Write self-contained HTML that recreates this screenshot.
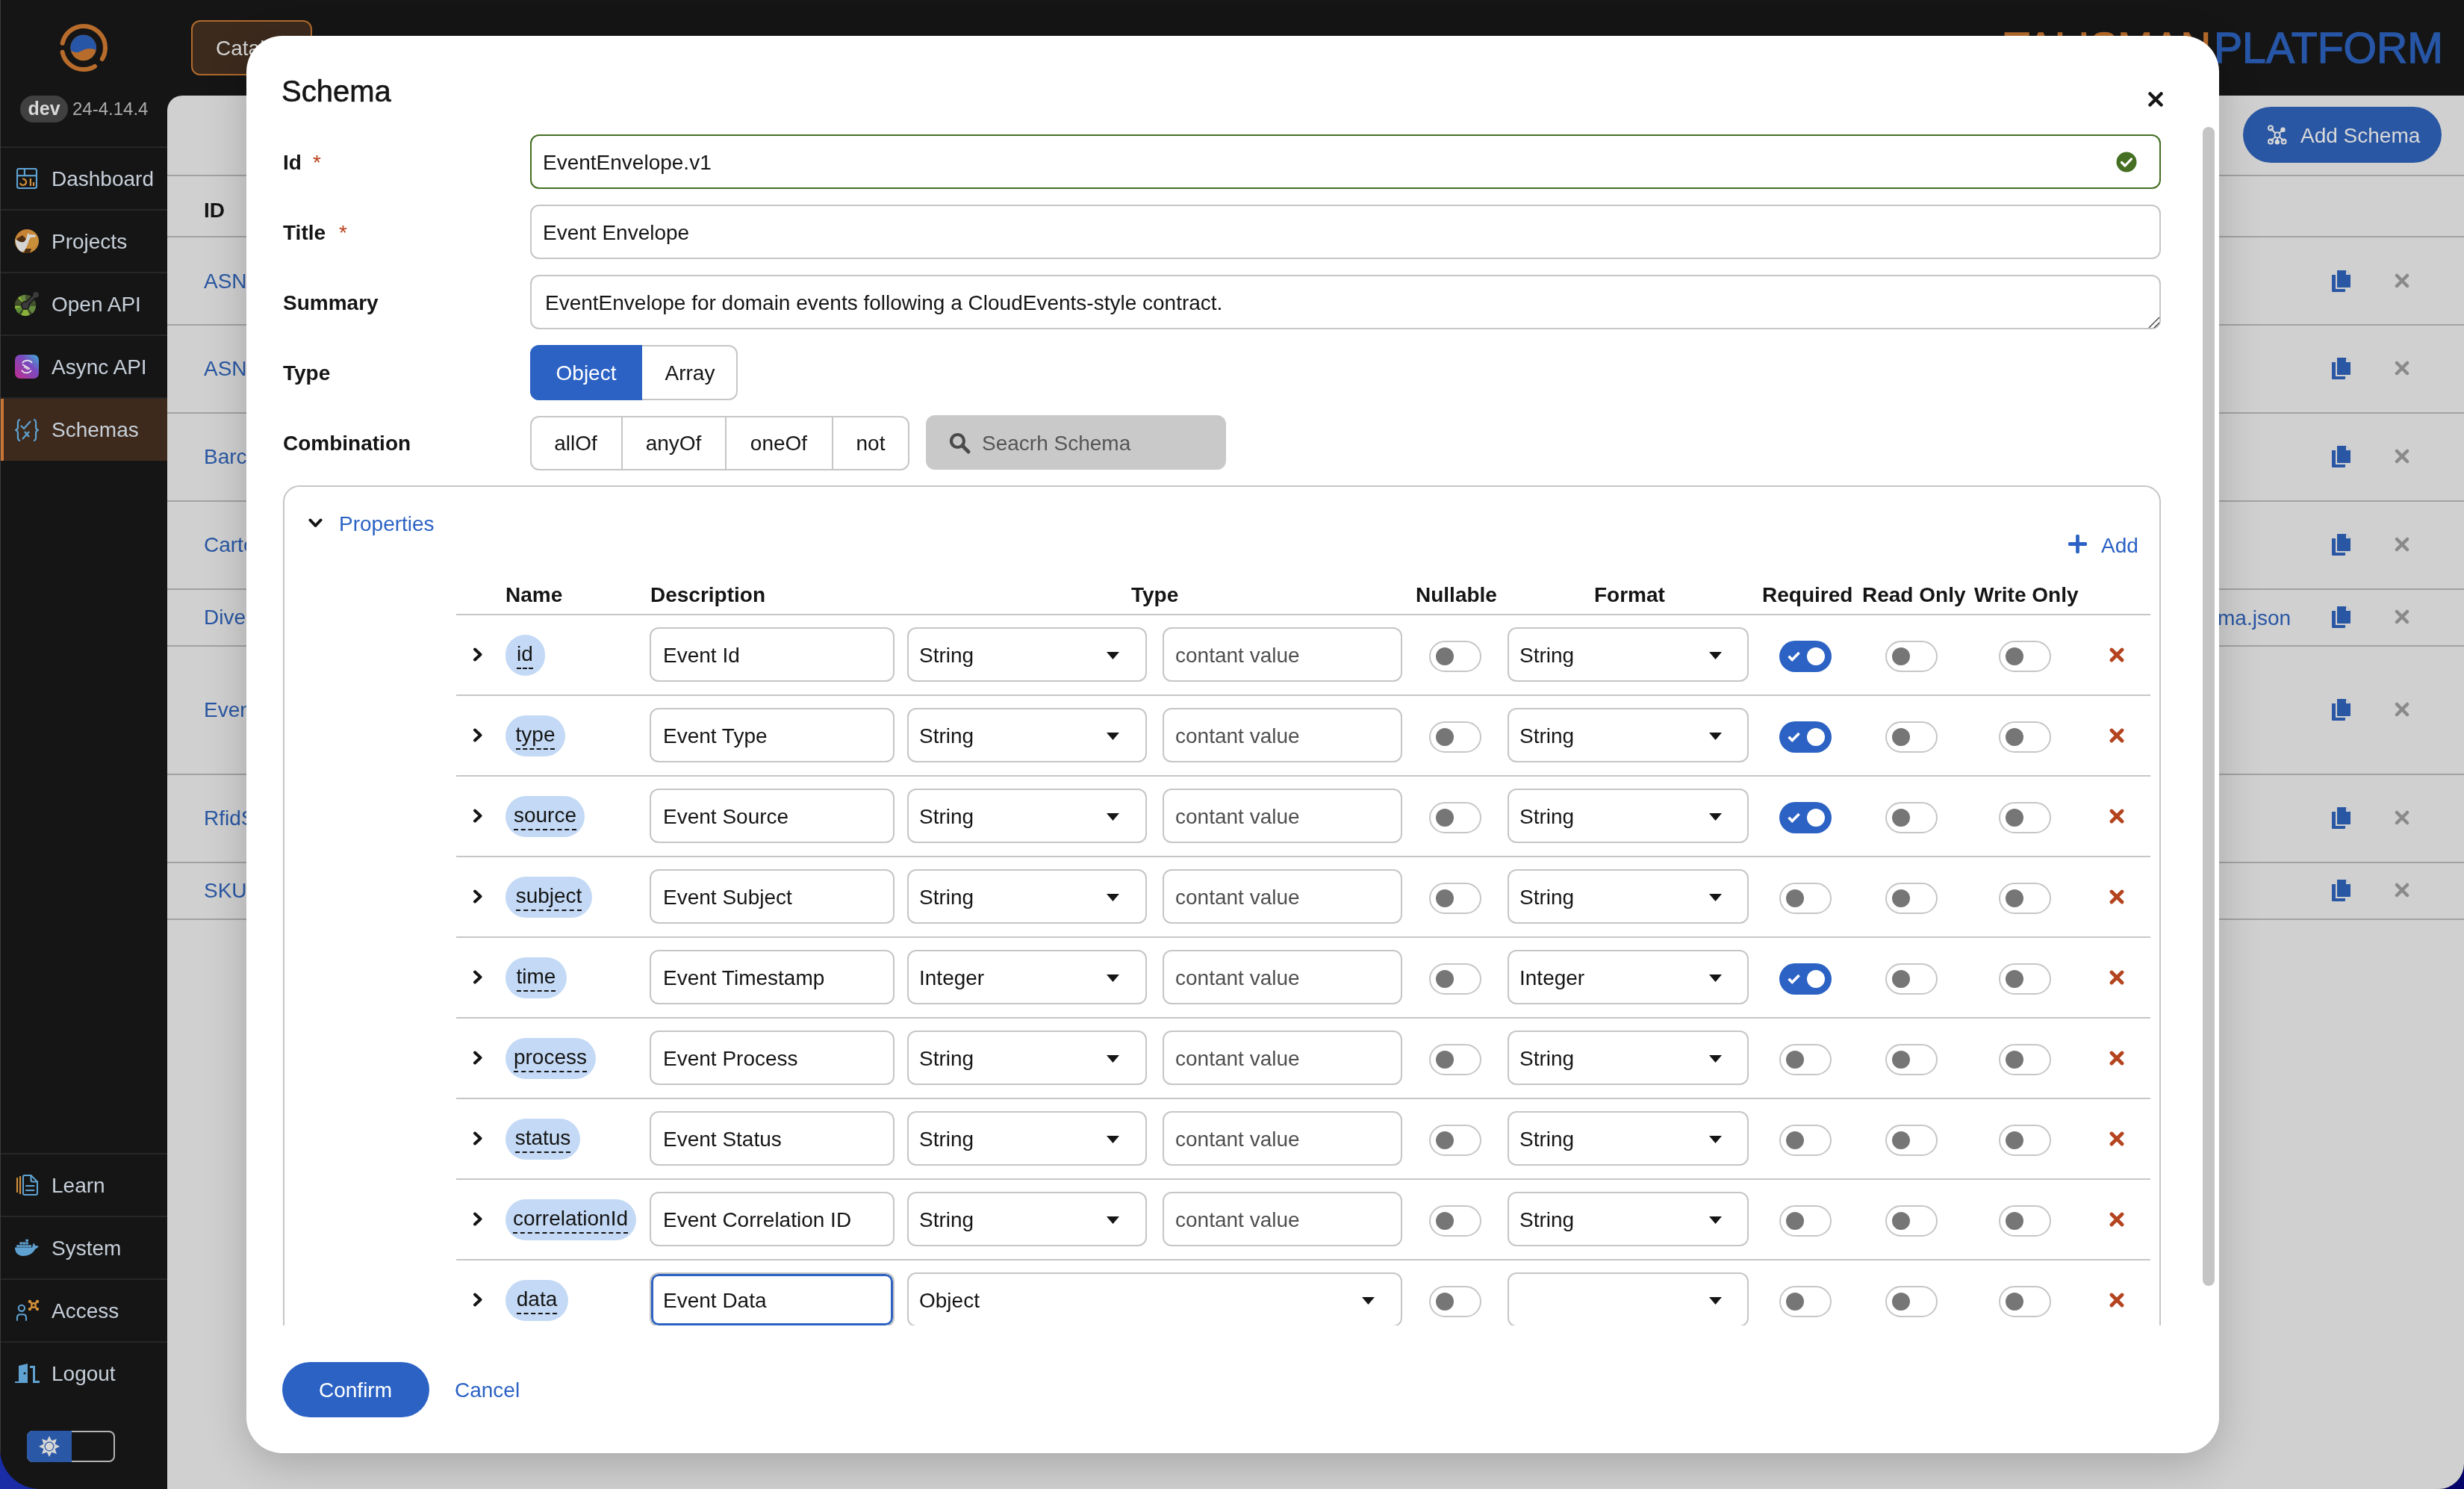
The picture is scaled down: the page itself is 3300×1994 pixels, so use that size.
<!DOCTYPE html><html><head><meta charset="utf-8"><style>
html,body{margin:0;padding:0;width:3300px;height:1994px;overflow:hidden;font-family:"Liberation Sans", sans-serif;}
body{background:linear-gradient(90deg,#1a2ca6 0%,#0d1a8a 40%,#03036a 100%);}
#win{will-change:transform;position:absolute;left:0;top:0;width:3300px;height:1994px;border-radius:0 0 34px 54px;overflow:hidden;background:#151515;}
</style></head><body><div id="win">
<div style="position:absolute;left:0px;top:0px;width:1px;height:1993px;background:#3a3a3a"></div>
<svg style="position:absolute;left:80px;top:32px" width="64" height="64" viewBox="0 0 64 64">
<circle cx="32" cy="32" r="29" fill="none" stroke="#b86c2c" stroke-width="6" stroke-linecap="round" stroke-dasharray="55.33 12.00 100.88 14.00" stroke-dashoffset="-29.78" />
<clipPath id="lc"><circle cx="31.7" cy="32" r="17.3"/></clipPath>
<g clip-path="url(#lc)"><rect x="0" y="0" width="64" height="64" fill="#b86c2c"/>
<path d="M10 33.3 C 16 36, 20 39.5, 25 38 C 30 36, 34 33, 40 33 C 44 33, 47 34.5, 52 36 L52 0 L10 0 Z" fill="#2756a6"/></g>
</svg>
<div style="position:absolute;left:27px;top:128px;width:64px;height:36px;background:#404040;border-radius:18px"></div>
<div style="position:absolute;left:-441px;width:1000px;text-align:center;top:133px;font-size:25px;line-height:25px;font-weight:700;color:#d8d8d8;white-space:nowrap;">dev</div>
<div style="position:absolute;left:97px;top:134px;font-size:24px;line-height:24px;font-weight:400;color:#ababab;white-space:nowrap;">24-4.14.4</div>
<div style="position:absolute;left:1px;top:196px;width:223px;height:2px;background:#262626"></div>
<div style="position:absolute;left:1px;top:280px;width:223px;height:2px;background:#262626"></div>
<div style="position:absolute;left:1px;top:364px;width:223px;height:2px;background:#262626"></div>
<div style="position:absolute;left:1px;top:448px;width:223px;height:2px;background:#262626"></div>
<div style="position:absolute;left:1px;top:532px;width:223px;height:2px;background:#262626"></div>
<div style="position:absolute;left:1px;top:1544px;width:223px;height:2px;background:#262626"></div>
<div style="position:absolute;left:1px;top:1628px;width:223px;height:2px;background:#262626"></div>
<div style="position:absolute;left:1px;top:1712px;width:223px;height:2px;background:#262626"></div>
<div style="position:absolute;left:1px;top:1796px;width:223px;height:2px;background:#262626"></div>
<div style="position:absolute;left:1px;top:534px;width:223px;height:83px;background:#3d2a1c"></div>
<div style="position:absolute;left:1px;top:534px;width:4px;height:83px;background:#c87533"></div>
<div style="position:absolute;left:69px;top:226px;font-size:28px;line-height:28px;font-weight:400;color:#c6cfd9;white-space:nowrap;">Dashboard</div>
<div style="position:absolute;left:69px;top:310px;font-size:28px;line-height:28px;font-weight:400;color:#c6cfd9;white-space:nowrap;">Projects</div>
<div style="position:absolute;left:69px;top:394px;font-size:28px;line-height:28px;font-weight:400;color:#c6cfd9;white-space:nowrap;">Open API</div>
<div style="position:absolute;left:69px;top:478px;font-size:28px;line-height:28px;font-weight:400;color:#c6cfd9;white-space:nowrap;">Async API</div>
<div style="position:absolute;left:69px;top:562px;font-size:28px;line-height:28px;font-weight:400;color:#c6cfd9;white-space:nowrap;">Schemas</div>
<div style="position:absolute;left:69px;top:1574px;font-size:28px;line-height:28px;font-weight:400;color:#c6cfd9;white-space:nowrap;">Learn</div>
<div style="position:absolute;left:69px;top:1658px;font-size:28px;line-height:28px;font-weight:400;color:#c6cfd9;white-space:nowrap;">System</div>
<div style="position:absolute;left:69px;top:1742px;font-size:28px;line-height:28px;font-weight:400;color:#c6cfd9;white-space:nowrap;">Access</div>
<div style="position:absolute;left:69px;top:1826px;font-size:28px;line-height:28px;font-weight:400;color:#c6cfd9;white-space:nowrap;">Logout</div>
<svg style="position:absolute;left:22px;top:225px" width="28" height="28" viewBox="0 0 28 28"><rect x="1" y="1" width="26" height="26" rx="2.5" fill="none" stroke="#5fa2d2" stroke-width="2.2"/>
<line x1="1" y1="10.2" x2="27" y2="10.2" stroke="#5fa2d2" stroke-width="2.2"/><line x1="10.9" y1="1" x2="10.9" y2="10.2" stroke="#5fa2d2" stroke-width="2.2"/>
<path d="M8.9 14.6 A4.2 4.2 0 1 1 5.26 20.9" fill="none" stroke="#d4903a" stroke-width="2.2" stroke-linecap="round"/>
<rect x="17.8" y="14" width="2.2" height="10" fill="#d4903a"/><rect x="21.9" y="19" width="2.2" height="5" fill="#d4903a"/></svg>
<svg style="position:absolute;left:20px;top:307px" width="32" height="32" viewBox="0 0 32 32"><defs><linearGradient id="pg" x1="0" y1="0" x2="1" y2="1"><stop offset="0" stop-color="#c47a32"/><stop offset="0.7" stop-color="#c9903a"/><stop offset="1" stop-color="#c47a32"/></linearGradient></defs><circle cx="16" cy="16" r="16" fill="url(#pg)"/>
<path d="M2 13 L10 8 L15 13 L12 19 L6 18 Z" fill="#4e2e12"/>
<path d="M14 26 L22 26 L20 32 L12 32 Z" fill="#4e2e12"/>
<path d="M0.5 13 C 4 16, 8 18, 12 17 C 15 15, 16 10, 17 6 L 18 5 L 19 7 L 27 7.5 L 28.5 9 L 27 10.5 L 21 11 C 19 13, 18 19, 15 25 C 13 29, 11 30, 9 30.5 C 4 28, 1 22, 0.5 13 Z" fill="#d4d4d4"/></svg>
<svg style="position:absolute;left:20px;top:391px" width="34" height="34" viewBox="0 0 34 34"><path d="M14 18 L14.00 3.80 A14.2 14.2 0 0 1 24.04 7.96 Z" fill="#475330"/><path d="M14 18 L24.04 7.96 A14.2 14.2 0 0 1 28.20 18.00 Z" fill="#475330"/><path d="M14 18 L28.20 18.00 A14.2 14.2 0 0 1 23.13 28.88 Z" fill="#65893e"/><path d="M14 18 L23.13 28.88 A14.2 14.2 0 0 1 20.00 30.87 Z" fill="#3c4a28"/><path d="M14 18 L20.00 30.87 A14.2 14.2 0 0 1 8.00 30.87 Z" fill="#88b23a"/><path d="M14 18 L8.00 30.87 A14.2 14.2 0 0 1 4.87 28.88 Z" fill="#3e4c28"/><path d="M14 18 L4.87 28.88 A14.2 14.2 0 0 1 0.66 22.86 Z" fill="#5f8e3a"/><path d="M14 18 L0.66 22.86 A14.2 14.2 0 0 1 -0.20 18.00 Z" fill="#8cb83a"/><path d="M14 18 L-0.20 18.00 A14.2 14.2 0 0 1 3.96 7.96 Z" fill="#44502c"/><path d="M14 18 L3.96 7.96 A14.2 14.2 0 0 1 6.90 5.70 Z" fill="#8cb83a"/><path d="M14 18 L6.90 5.70 A14.2 14.2 0 0 1 14.00 3.80 Z" fill="#65893e"/><line x1="0" y1="18" x2="28" y2="18" stroke="#2e3a22" stroke-width="1"/><line x1="14" y1="18" x2="28.2" y2="3.8" stroke="#151515" stroke-width="6.5"/><circle cx="14" cy="18" r="6" fill="#151515"/><line x1="14" y1="18" x2="28.2" y2="3.8" stroke="#3b3b3d" stroke-width="3.6"/><circle cx="14" cy="18" r="4.6" fill="#3b3b3d"/><circle cx="28.2" cy="3.8" r="3.8" fill="#3b3b3d"/></svg>
<svg style="position:absolute;left:20px;top:475px" width="32" height="32" viewBox="0 0 32 32"><defs><linearGradient id="ag" x1="0" y1="1" x2="1" y2="0"><stop offset="0" stop-color="#c02e8e"/><stop offset="0.6" stop-color="#7a4ac0"/><stop offset="1" stop-color="#3ab0d8"/></linearGradient></defs>
<rect x="0" y="0" width="32" height="32" rx="7" fill="url(#ag)"/>
<path d="M23 11 A8 8 0 0 0 10 11" fill="none" stroke="#e8e8e8" stroke-width="1.8"/>
<path d="M9 21 A8 8 0 0 0 22 21" fill="none" stroke="#e8e8e8" stroke-width="1.8"/>
<line x1="10" y1="13" x2="20" y2="19" stroke="#e8e8e8" stroke-width="1.8"/><line x1="12" y1="16" x2="18" y2="20" stroke="#e8e8e8" stroke-width="1.5"/></svg>
<svg style="position:absolute;left:20px;top:561px" width="32" height="30" viewBox="0 0 32 30"><path d="M7 1 C3 1 4 6 4 11 C4 14 1 15 1 15 C1 15 4 16 4 19 C4 24 3 29 7 29" fill="none" stroke="#5fa2d2" stroke-width="2.2"/>
<path d="M25 1 C29 1 28 6 28 11 C28 14 31 15 31 15 C31 15 28 16 28 19 C28 24 29 29 25 29" fill="none" stroke="#5fa2d2" stroke-width="2.2"/>
<path d="M8 9 L12 13 L21 3" fill="none" stroke="#5fa2d2" stroke-width="2.2"/>
<path d="M13 17 L19 24 M19 17 L10 27" fill="none" stroke="#5fa2d2" stroke-width="2.2"/></svg>
<svg style="position:absolute;left:22px;top:1573px" width="29" height="29" viewBox="0 0 29 29"><rect x="0" y="4" width="2.1" height="20" fill="#d4903a"/><rect x="4" y="2" width="2.1" height="24" fill="#d4903a"/>
<path d="M11 1 L19.5 1 L28 9.5 L28 25 Q28 27 26 27 L11 27 Q9 27 9 25 L9 3 Q9 1 11 1 Z" fill="none" stroke="#5fa2d2" stroke-width="2.1" stroke-linejoin="round"/>
<path d="M19.5 1 L19.5 7.5 Q19.5 9.5 21.5 9.5 L28 9.5" fill="none" stroke="#5fa2d2" stroke-width="2.1"/>
<rect x="12.2" y="14" width="12" height="2.1" fill="#5fa2d2"/><rect x="12.2" y="20" width="12" height="2.1" fill="#5fa2d2"/></svg>
<svg style="position:absolute;left:20px;top:1658px" width="33" height="26" viewBox="0 0 33 26"><path d="M0 12.6 L23.2 12.6 C23.5 10, 24.3 7.5, 25.2 6.4 C26 7.6, 26.6 8.8, 27.2 10 C28.8 10, 30.4 10.2, 31.8 10.9 C30.6 12.6, 29 14, 27.3 14.6 C24.5 20.5, 18.5 24, 11 24 C4 24, 0 19.5, 0 12.6 Z" fill="#5fa2d2"/><rect x="2.3" y="9.2" width="3.6" height="3.0" fill="#5fa2d2"/><rect x="6.3" y="9.2" width="3.6" height="3.0" fill="#5fa2d2"/><rect x="10.3" y="9.2" width="3.6" height="3.0" fill="#5fa2d2"/><rect x="14.3" y="9.2" width="3.6" height="3.0" fill="#5fa2d2"/><rect x="18.3" y="9.2" width="3.6" height="3.0" fill="#5fa2d2"/><rect x="6.3" y="5.4" width="3.6" height="3.0" fill="#5fa2d2"/><rect x="10.3" y="5.4" width="3.6" height="3.0" fill="#5fa2d2"/><rect x="14.3" y="5.4" width="3.6" height="3.0" fill="#5fa2d2"/><rect x="14.3" y="1.7" width="3.6" height="3.0" fill="#5fa2d2"/></svg>
<svg style="position:absolute;left:20px;top:1740px" width="34" height="31" viewBox="0 0 34 31"><circle cx="8.9" cy="11.8" r="4.1" fill="none" stroke="#5fa2d2" stroke-width="2.1"/>
<path d="M3 28.8 L3 24.5 Q3 20.2 7.3 20.2 L10.7 20.2 Q15 20.2 15 24.5 L15 28.8" fill="none" stroke="#5fa2d2" stroke-width="2.1"/>
<path d="M19.9 2.9 L30 13.1 M30 2.9 L19.9 13.1" stroke="#d4903a" stroke-width="2.4"/>
<circle cx="19.9" cy="2.9" r="2.2" fill="#d4903a"/><circle cx="30" cy="2.9" r="2.2" fill="#d4903a"/><circle cx="19.9" cy="13.1" r="2.2" fill="#d4903a"/><circle cx="30" cy="13.1" r="2.2" fill="#d4903a"/>
<circle cx="24.95" cy="8" r="3.9" fill="#d4903a"/><circle cx="24.95" cy="8" r="1.6" fill="#151515"/></svg>
<svg style="position:absolute;left:20px;top:1825px" width="33" height="28" viewBox="0 0 33 28"><path d="M0 25 L5 25 L5 4 L17 1 L17 25 L17 27 L0 27 Z" fill="#5fa2d2"/>
<path d="M20 4 L27 4 L27 24 L33 24 L33 27 L24 27 L24 7 L20 7 Z" fill="#5fa2d2"/>
<circle cx="13" cy="14" r="1.5" fill="#151515"/></svg>
<div style="position:absolute;left:36px;top:1916px;width:118px;height:42px;border:2px solid #b3b3b3;border-radius:8px;box-sizing:border-box"></div>
<div style="position:absolute;left:36px;top:1916px;width:60px;height:42px;background:#2a58a6;border-radius:8px 0 0 8px"></div>
<svg style="position:absolute;left:52px;top:1923px" width="28" height="28" viewBox="0 0 28 28"><polygon points="14,0 17.2,6.3 23.9,4.1 21.7,10.8 28,14 21.7,17.2 23.9,23.9 17.2,21.7 14,28 10.8,21.7 4.1,23.9 6.3,17.2 0,14 6.3,10.8 4.1,4.1 10.8,6.3" fill="#d6d6d6"/>
<circle cx="14" cy="14" r="6.5" fill="#2a58a6"/><circle cx="14" cy="14" r="5.2" fill="#d6d6d6"/></svg>
<div style="position:absolute;left:256px;top:27px;width:162px;height:74px;background:#3c2a1d;border:2px solid #b06a2c;border-radius:12px;box-sizing:border-box"></div>
<div style="position:absolute;left:289px;top:51px;font-size:28px;line-height:28px;font-weight:400;color:#d6d6d6;white-space:nowrap;">Catalog</div>
<div style="position:absolute;left:2684px;top:35px;font-size:58px;line-height:58px;font-weight:400;color:#b86c2c;white-space:nowrap;transform-origin:0 0;transform:scaleX(0.97);-webkit-text-stroke:1.4px #b86c2c">TALISMAN</div>
<div style="position:absolute;left:2965px;top:35px;font-size:58px;line-height:58px;font-weight:400;color:#2756a6;white-space:nowrap;transform-origin:0 0;transform:scaleX(0.985);-webkit-text-stroke:1.4px #2756a6">PLATFORM</div>
<div style="position:absolute;left:224px;top:128px;width:3076px;height:1866px;background:#d0d0d0;border-top-left-radius:20px"></div>
<div style="position:absolute;left:3004px;top:143px;width:266px;height:75px;background:#2957a4;border-radius:38px"></div>
<svg style="position:absolute;left:3036px;top:167px" width="28" height="28" viewBox="0 0 28 28"><g stroke="#d8d8d8" stroke-width="2" fill="none"><line x1="5" y1="5" x2="14" y2="14"/><line x1="22" y1="6" x2="14" y2="14"/><line x1="14" y1="14" x2="5" y2="22"/><line x1="14" y1="14" x2="23" y2="22"/><line x1="14" y1="14" x2="14" y2="23"/><circle cx="5" cy="4.6" r="3"/><circle cx="5" cy="22.5" r="3"/><circle cx="22.6" cy="22.5" r="3"/><circle cx="14" cy="13.8" r="3.6" fill="#2957a4"/></g><circle cx="21.5" cy="6.7" r="3.2" fill="#d8d8d8"/><circle cx="13.8" cy="23.2" r="3.2" fill="#d8d8d8"/></svg>
<div style="position:absolute;left:3081px;top:168px;font-size:28px;line-height:28px;font-weight:400;color:#d8d8d8;white-space:nowrap;">Add Schema</div>
<div style="position:absolute;left:224px;top:234px;width:3076px;height:2px;background:#a2a2a2"></div>
<div style="position:absolute;left:224px;top:316px;width:3076px;height:2px;background:#a2a2a2"></div>
<div style="position:absolute;left:224px;top:434px;width:3076px;height:2px;background:#a2a2a2"></div>
<div style="position:absolute;left:224px;top:552px;width:3076px;height:2px;background:#a2a2a2"></div>
<div style="position:absolute;left:224px;top:670px;width:3076px;height:2px;background:#a2a2a2"></div>
<div style="position:absolute;left:224px;top:788px;width:3076px;height:2px;background:#a2a2a2"></div>
<div style="position:absolute;left:224px;top:864px;width:3076px;height:2px;background:#a2a2a2"></div>
<div style="position:absolute;left:224px;top:1036px;width:3076px;height:2px;background:#a2a2a2"></div>
<div style="position:absolute;left:224px;top:1154px;width:3076px;height:2px;background:#a2a2a2"></div>
<div style="position:absolute;left:224px;top:1230px;width:3076px;height:2px;background:#a2a2a2"></div>
<div style="position:absolute;left:273px;top:268px;font-size:28px;line-height:28px;font-weight:700;color:#151515;white-space:nowrap;">ID</div>
<div style="position:absolute;left:273px;top:363px;font-size:28px;line-height:28px;font-weight:400;color:#2957a3;white-space:nowrap;">ASN.v1</div>
<svg style="position:absolute;left:3123px;top:362px" width="25" height="29" viewBox="0 0 25 29"><path d="M7 0 L19 0 L25 6 L25 22 Q25 23 24 23 L8 23 Q7 23 7 22 Z" fill="#2957a3"/><path d="M19 0 L19 6 L25 6" fill="#d0d0d0"/><path d="M0 6 L5 6 L5 25 L18 25 L18 28 Q18 29 17 29 L1 29 Q0 29 0 28 Z" fill="#2957a3"/></svg>
<svg style="position:absolute;left:3207px;top:366px" width="20" height="20" viewBox="0 0 20 20"><path d="M3 3 L17 17 M17 3 L3 17" stroke="#8a8a8a" stroke-width="4.5" stroke-linecap="round"/></svg>
<div style="position:absolute;left:273px;top:480px;font-size:28px;line-height:28px;font-weight:400;color:#2957a3;white-space:nowrap;">ASNLine.v1</div>
<svg style="position:absolute;left:3123px;top:479px" width="25" height="29" viewBox="0 0 25 29"><path d="M7 0 L19 0 L25 6 L25 22 Q25 23 24 23 L8 23 Q7 23 7 22 Z" fill="#2957a3"/><path d="M19 0 L19 6 L25 6" fill="#d0d0d0"/><path d="M0 6 L5 6 L5 25 L18 25 L18 28 Q18 29 17 29 L1 29 Q0 29 0 28 Z" fill="#2957a3"/></svg>
<svg style="position:absolute;left:3207px;top:483px" width="20" height="20" viewBox="0 0 20 20"><path d="M3 3 L17 17 M17 3 L3 17" stroke="#8a8a8a" stroke-width="4.5" stroke-linecap="round"/></svg>
<div style="position:absolute;left:273px;top:598px;font-size:28px;line-height:28px;font-weight:400;color:#2957a3;white-space:nowrap;">Barcode.v1</div>
<svg style="position:absolute;left:3123px;top:597px" width="25" height="29" viewBox="0 0 25 29"><path d="M7 0 L19 0 L25 6 L25 22 Q25 23 24 23 L8 23 Q7 23 7 22 Z" fill="#2957a3"/><path d="M19 0 L19 6 L25 6" fill="#d0d0d0"/><path d="M0 6 L5 6 L5 25 L18 25 L18 28 Q18 29 17 29 L1 29 Q0 29 0 28 Z" fill="#2957a3"/></svg>
<svg style="position:absolute;left:3207px;top:601px" width="20" height="20" viewBox="0 0 20 20"><path d="M3 3 L17 17 M17 3 L3 17" stroke="#8a8a8a" stroke-width="4.5" stroke-linecap="round"/></svg>
<div style="position:absolute;left:273px;top:716px;font-size:28px;line-height:28px;font-weight:400;color:#2957a3;white-space:nowrap;">Carton.v1</div>
<svg style="position:absolute;left:3123px;top:715px" width="25" height="29" viewBox="0 0 25 29"><path d="M7 0 L19 0 L25 6 L25 22 Q25 23 24 23 L8 23 Q7 23 7 22 Z" fill="#2957a3"/><path d="M19 0 L19 6 L25 6" fill="#d0d0d0"/><path d="M0 6 L5 6 L5 25 L18 25 L18 28 Q18 29 17 29 L1 29 Q0 29 0 28 Z" fill="#2957a3"/></svg>
<svg style="position:absolute;left:3207px;top:719px" width="20" height="20" viewBox="0 0 20 20"><path d="M3 3 L17 17 M17 3 L3 17" stroke="#8a8a8a" stroke-width="4.5" stroke-linecap="round"/></svg>
<div style="position:absolute;left:273px;top:813px;font-size:28px;line-height:28px;font-weight:400;color:#2957a3;white-space:nowrap;">Diverter.v1</div>
<svg style="position:absolute;left:3123px;top:812px" width="25" height="29" viewBox="0 0 25 29"><path d="M7 0 L19 0 L25 6 L25 22 Q25 23 24 23 L8 23 Q7 23 7 22 Z" fill="#2957a3"/><path d="M19 0 L19 6 L25 6" fill="#d0d0d0"/><path d="M0 6 L5 6 L5 25 L18 25 L18 28 Q18 29 17 29 L1 29 Q0 29 0 28 Z" fill="#2957a3"/></svg>
<svg style="position:absolute;left:3207px;top:816px" width="20" height="20" viewBox="0 0 20 20"><path d="M3 3 L17 17 M17 3 L3 17" stroke="#8a8a8a" stroke-width="4.5" stroke-linecap="round"/></svg>
<div style="position:absolute;left:273px;top:937px;font-size:28px;line-height:28px;font-weight:400;color:#2957a3;white-space:nowrap;">EventEnvelope.v1</div>
<svg style="position:absolute;left:3123px;top:936px" width="25" height="29" viewBox="0 0 25 29"><path d="M7 0 L19 0 L25 6 L25 22 Q25 23 24 23 L8 23 Q7 23 7 22 Z" fill="#2957a3"/><path d="M19 0 L19 6 L25 6" fill="#d0d0d0"/><path d="M0 6 L5 6 L5 25 L18 25 L18 28 Q18 29 17 29 L1 29 Q0 29 0 28 Z" fill="#2957a3"/></svg>
<svg style="position:absolute;left:3207px;top:940px" width="20" height="20" viewBox="0 0 20 20"><path d="M3 3 L17 17 M17 3 L3 17" stroke="#8a8a8a" stroke-width="4.5" stroke-linecap="round"/></svg>
<div style="position:absolute;left:273px;top:1082px;font-size:28px;line-height:28px;font-weight:400;color:#2957a3;white-space:nowrap;">RfidScan.v1</div>
<svg style="position:absolute;left:3123px;top:1081px" width="25" height="29" viewBox="0 0 25 29"><path d="M7 0 L19 0 L25 6 L25 22 Q25 23 24 23 L8 23 Q7 23 7 22 Z" fill="#2957a3"/><path d="M19 0 L19 6 L25 6" fill="#d0d0d0"/><path d="M0 6 L5 6 L5 25 L18 25 L18 28 Q18 29 17 29 L1 29 Q0 29 0 28 Z" fill="#2957a3"/></svg>
<svg style="position:absolute;left:3207px;top:1085px" width="20" height="20" viewBox="0 0 20 20"><path d="M3 3 L17 17 M17 3 L3 17" stroke="#8a8a8a" stroke-width="4.5" stroke-linecap="round"/></svg>
<div style="position:absolute;left:273px;top:1179px;font-size:28px;line-height:28px;font-weight:400;color:#2957a3;white-space:nowrap;">SKU.v1</div>
<svg style="position:absolute;left:3123px;top:1178px" width="25" height="29" viewBox="0 0 25 29"><path d="M7 0 L19 0 L25 6 L25 22 Q25 23 24 23 L8 23 Q7 23 7 22 Z" fill="#2957a3"/><path d="M19 0 L19 6 L25 6" fill="#d0d0d0"/><path d="M0 6 L5 6 L5 25 L18 25 L18 28 Q18 29 17 29 L1 29 Q0 29 0 28 Z" fill="#2957a3"/></svg>
<svg style="position:absolute;left:3207px;top:1182px" width="20" height="20" viewBox="0 0 20 20"><path d="M3 3 L17 17 M17 3 L3 17" stroke="#8a8a8a" stroke-width="4.5" stroke-linecap="round"/></svg>
<div style="position:absolute;left:2970px;top:814px;font-size:28px;line-height:28px;font-weight:400;color:#2957a3;white-space:nowrap;">ma.json</div>
<div style="position:absolute;left:330px;top:48px;width:2642px;height:1898px;background:#ffffff;border-radius:48px;box-shadow:0 14px 56px rgba(0,0,0,0.2)"></div>
<div style="position:absolute;left:377px;top:102px;font-size:40px;line-height:40px;font-weight:400;color:#151515;white-space:nowrap;-webkit-text-stroke:0.6px #151515">Schema</div>
<svg style="position:absolute;left:2877px;top:123px" width="20" height="20" viewBox="0 0 20 20"><path d="M2.5 2.5 L17.5 17.5 M17.5 2.5 L2.5 17.5" stroke="#151515" stroke-width="4.5" stroke-linecap="round"/></svg>
<div style="position:absolute;left:2950px;top:170px;width:16px;height:1552px;background:#c4c4c4;border-radius:8px"></div>
<div style="position:absolute;left:330px;top:150px;width:2620px;height:1625px;overflow:hidden"><div style="position:absolute;left:-330px;top:-150px;width:3300px;height:1994px">
<div style="position:absolute;left:379px;top:204px;font-size:28px;line-height:28px;font-weight:700;color:#151515;white-space:nowrap;">Id</div>
<div style="position:absolute;left:379px;top:298px;font-size:28px;line-height:28px;font-weight:700;color:#151515;white-space:nowrap;">Title</div>
<div style="position:absolute;left:379px;top:392px;font-size:28px;line-height:28px;font-weight:700;color:#151515;white-space:nowrap;">Summary</div>
<div style="position:absolute;left:379px;top:486px;font-size:28px;line-height:28px;font-weight:700;color:#151515;white-space:nowrap;">Type</div>
<div style="position:absolute;left:379px;top:580px;font-size:28px;line-height:28px;font-weight:700;color:#151515;white-space:nowrap;">Combination</div>
<div style="position:absolute;left:419px;top:204px;font-size:28px;line-height:28px;font-weight:400;color:#b8401c;white-space:nowrap;">*</div>
<div style="position:absolute;left:454px;top:298px;font-size:28px;line-height:28px;font-weight:400;color:#b8401c;white-space:nowrap;">*</div>
<div style="position:absolute;left:710px;top:180px;width:2184px;height:73px;border:2.6px solid #456f23;border-radius:12px;box-sizing:border-box"></div>
<div style="position:absolute;left:727px;top:204px;font-size:28px;line-height:28px;font-weight:400;color:#151515;white-space:nowrap;">EventEnvelope.v1</div>
<svg style="position:absolute;left:2834px;top:203px" width="28" height="28" viewBox="0 0 28 28"><circle cx="14" cy="14" r="13.5" fill="#456f23"/><path d="M7.5 14.5 L12 19 L20.5 10" fill="none" stroke="#fff" stroke-width="3.2" stroke-linecap="round" stroke-linejoin="round"/></svg>
<div style="position:absolute;left:710px;top:274px;width:2184px;height:73px;border:2px solid #c6c6c6;border-radius:12px;box-sizing:border-box"></div>
<div style="position:absolute;left:727px;top:298px;font-size:28px;line-height:28px;font-weight:400;color:#151515;white-space:nowrap;">Event Envelope</div>
<div style="position:absolute;left:710px;top:368px;width:2184px;height:73px;border:2px solid #c6c6c6;border-radius:12px;box-sizing:border-box"></div>
<div style="position:absolute;left:730px;top:392px;font-size:28px;line-height:28px;font-weight:400;color:#151515;white-space:nowrap;">EventEnvelope for domain events following a CloudEvents-style contract.</div>
<svg style="position:absolute;left:2877px;top:424px" width="16" height="16" viewBox="0 0 16 16"><path d="M1 15 L15 1 M8 15 L15 8" stroke="#555" stroke-width="1.6"/></svg>
<div style="position:absolute;left:710px;top:462px;width:278px;height:74px;border:2px solid #c6c6c6;border-radius:12px;box-sizing:border-box"></div>
<div style="position:absolute;left:710px;top:462px;width:150px;height:74px;background:#2b62c4;border-radius:12px 0 0 12px"></div>
<div style="position:absolute;left:285px;width:1000px;text-align:center;top:486px;font-size:28px;line-height:28px;font-weight:400;color:#ffffff;white-space:nowrap;">Object</div>
<div style="position:absolute;left:424px;width:1000px;text-align:center;top:486px;font-size:28px;line-height:28px;font-weight:400;color:#151515;white-space:nowrap;">Array</div>
<div style="position:absolute;left:710px;top:557px;width:508px;height:73px;border:2px solid #c6c6c6;border-radius:12px;box-sizing:border-box"></div>
<div style="position:absolute;left:832px;top:557px;width:2px;height:73px;background:#c6c6c6"></div>
<div style="position:absolute;left:971px;top:557px;width:2px;height:73px;background:#c6c6c6"></div>
<div style="position:absolute;left:1114px;top:557px;width:2px;height:73px;background:#c6c6c6"></div>
<div style="position:absolute;left:271px;width:1000px;text-align:center;top:580px;font-size:28px;line-height:28px;font-weight:400;color:#151515;white-space:nowrap;">allOf</div>
<div style="position:absolute;left:402px;width:1000px;text-align:center;top:580px;font-size:28px;line-height:28px;font-weight:400;color:#151515;white-space:nowrap;">anyOf</div>
<div style="position:absolute;left:543px;width:1000px;text-align:center;top:580px;font-size:28px;line-height:28px;font-weight:400;color:#151515;white-space:nowrap;">oneOf</div>
<div style="position:absolute;left:666px;width:1000px;text-align:center;top:580px;font-size:28px;line-height:28px;font-weight:400;color:#151515;white-space:nowrap;">not</div>
<div style="position:absolute;left:1240px;top:556px;width:402px;height:73px;background:#c9c9c9;border-radius:12px"></div>
<svg style="position:absolute;left:1271px;top:579px" width="29" height="29" viewBox="0 0 29 29"><circle cx="11.5" cy="11.5" r="8.5" fill="none" stroke="#4a4a4a" stroke-width="4.2"/><line x1="18" y1="18" x2="26" y2="26" stroke="#4a4a4a" stroke-width="4.8" stroke-linecap="round"/></svg>
<div style="position:absolute;left:1315px;top:580px;font-size:28px;line-height:28px;font-weight:400;color:#555555;white-space:nowrap;">Seacrh Schema</div>
<div style="position:absolute;left:379px;top:650px;width:2515px;height:1300px;border:2px solid #c6c6c6;border-radius:22px;box-sizing:border-box"></div>
<svg style="position:absolute;left:413px;top:694px" width="19" height="14" viewBox="0 0 19 14"><path d="M2.5 2.5 L9.5 10 L16.5 2.5" fill="none" stroke="#151515" stroke-width="4" stroke-linecap="round" stroke-linejoin="round"/></svg>
<div style="position:absolute;left:454px;top:688px;font-size:28px;line-height:28px;font-weight:400;color:#2b62c4;white-space:nowrap;">Properties</div>
<svg style="position:absolute;left:2770px;top:716px" width="25" height="25" viewBox="0 0 25 25"><path d="M12.5 2 L12.5 23 M2 12.5 L23 12.5" stroke="#2b62c4" stroke-width="4.8" stroke-linecap="round"/></svg>
<div style="position:absolute;left:2814px;top:717px;font-size:28px;line-height:28px;font-weight:400;color:#2b62c4;white-space:nowrap;">Add</div>
<div style="position:absolute;left:677px;top:783px;font-size:28px;line-height:28px;font-weight:700;color:#151515;white-space:nowrap;">Name</div>
<div style="position:absolute;left:871px;top:783px;font-size:28px;line-height:28px;font-weight:700;color:#151515;white-space:nowrap;">Description</div>
<div style="position:absolute;left:1515px;top:783px;font-size:28px;line-height:28px;font-weight:700;color:#151515;white-space:nowrap;">Type</div>
<div style="position:absolute;left:1896px;top:783px;font-size:28px;line-height:28px;font-weight:700;color:#151515;white-space:nowrap;">Nullable</div>
<div style="position:absolute;left:2135px;top:783px;font-size:28px;line-height:28px;font-weight:700;color:#151515;white-space:nowrap;">Format</div>
<div style="position:absolute;left:2360px;top:783px;font-size:28px;line-height:28px;font-weight:700;color:#151515;white-space:nowrap;">Required</div>
<div style="position:absolute;left:2494px;top:783px;font-size:28px;line-height:28px;font-weight:700;color:#151515;white-space:nowrap;">Read Only</div>
<div style="position:absolute;left:2644px;top:783px;font-size:28px;line-height:28px;font-weight:700;color:#151515;white-space:nowrap;">Write Only</div>
<div style="position:absolute;left:611px;top:822px;width:2269px;height:2px;background:#c6c6c6"></div>
<svg style="position:absolute;left:633px;top:867px" width="14" height="19" viewBox="0 0 14 19"><path d="M3 2.5 L10.5 9.5 L3 16.5" fill="none" stroke="#151515" stroke-width="4" stroke-linecap="round" stroke-linejoin="round"/></svg>
<div style="position:absolute;left:677px;top:850px;width:53px;height:55px;background:#c3d9f5;border-radius:28px"></div>
<div style="position:absolute;left:203px;width:1000px;text-align:center;top:862px;font-size:28px;line-height:28px;font-weight:400;color:#151515;white-space:nowrap;"><span style="border-bottom:2px dashed #151515;padding-bottom:3px">id</span></div>
<div style="position:absolute;left:870px;top:840px;width:328px;height:73px;border:2px solid #c6c6c6;border-radius:12px;box-sizing:border-box"></div>
<div style="position:absolute;left:888px;top:864px;font-size:28px;line-height:28px;font-weight:400;color:#151515;white-space:nowrap;">Event Id</div>
<div style="position:absolute;left:1215px;top:840px;width:321px;height:73px;border:2px solid #c6c6c6;border-radius:12px;box-sizing:border-box"></div>
<div style="position:absolute;left:1231px;top:864px;font-size:28px;line-height:28px;font-weight:400;color:#151515;white-space:nowrap;">String</div>
<svg style="position:absolute;left:1482px;top:873px" width="17" height="10" viewBox="0 0 17 10"><path d="M0 0 L17 0 L8.5 10 Z" fill="#151515"/></svg>
<div style="position:absolute;left:1557px;top:840px;width:321px;height:73px;border:2px solid #c6c6c6;border-radius:12px;box-sizing:border-box"></div>
<div style="position:absolute;left:1574px;top:864px;font-size:28px;line-height:28px;font-weight:400;color:#4f4f4f;white-space:nowrap;">contant value</div>
<div style="position:absolute;left:1914px;top:858px;width:70px;height:42px;border:2px solid #c6c6c6;border-radius:21px;box-sizing:border-box;background:#fff"></div>
<div style="position:absolute;left:1923px;top:867px;width:24px;height:24px;border-radius:12px;background:#767676"></div>
<div style="position:absolute;left:2019px;top:840px;width:323px;height:73px;border:2px solid #c6c6c6;border-radius:12px;box-sizing:border-box"></div>
<div style="position:absolute;left:2035px;top:864px;font-size:28px;line-height:28px;font-weight:400;color:#151515;white-space:nowrap;">String</div>
<svg style="position:absolute;left:2289px;top:873px" width="17" height="10" viewBox="0 0 17 10"><path d="M0 0 L17 0 L8.5 10 Z" fill="#151515"/></svg>
<div style="position:absolute;left:2383px;top:858px;width:70px;height:42px;background:#2b62c4;border-radius:21px"></div>
<div style="position:absolute;left:2420px;top:867px;width:24px;height:24px;border-radius:12px;background:#fff"></div>
<svg style="position:absolute;left:2393px;top:871px" width="20" height="16" viewBox="0 0 20 16"><path d="M2.6 7.8 L7.2 12.4 L16.6 3" fill="none" stroke="#fff" stroke-width="3.6"/></svg>
<div style="position:absolute;left:2525px;top:858px;width:70px;height:42px;border:2px solid #c6c6c6;border-radius:21px;box-sizing:border-box;background:#fff"></div>
<div style="position:absolute;left:2534px;top:867px;width:24px;height:24px;border-radius:12px;background:#767676"></div>
<div style="position:absolute;left:2677px;top:858px;width:70px;height:42px;border:2px solid #c6c6c6;border-radius:21px;box-sizing:border-box;background:#fff"></div>
<div style="position:absolute;left:2686px;top:867px;width:24px;height:24px;border-radius:12px;background:#767676"></div>
<svg style="position:absolute;left:2825px;top:867px" width="20" height="20" viewBox="0 0 20 20"><path d="M3 3 L17 17 M17 3 L3 17" stroke="#b4441f" stroke-width="4.8" stroke-linecap="round"/></svg>
<div style="position:absolute;left:611px;top:930px;width:2269px;height:2px;background:#c6c6c6"></div>
<svg style="position:absolute;left:633px;top:975px" width="14" height="19" viewBox="0 0 14 19"><path d="M3 2.5 L10.5 9.5 L3 16.5" fill="none" stroke="#151515" stroke-width="4" stroke-linecap="round" stroke-linejoin="round"/></svg>
<div style="position:absolute;left:677px;top:958px;width:80px;height:55px;background:#c3d9f5;border-radius:28px"></div>
<div style="position:absolute;left:217px;width:1000px;text-align:center;top:970px;font-size:28px;line-height:28px;font-weight:400;color:#151515;white-space:nowrap;"><span style="border-bottom:2px dashed #151515;padding-bottom:3px">type</span></div>
<div style="position:absolute;left:870px;top:948px;width:328px;height:73px;border:2px solid #c6c6c6;border-radius:12px;box-sizing:border-box"></div>
<div style="position:absolute;left:888px;top:972px;font-size:28px;line-height:28px;font-weight:400;color:#151515;white-space:nowrap;">Event Type</div>
<div style="position:absolute;left:1215px;top:948px;width:321px;height:73px;border:2px solid #c6c6c6;border-radius:12px;box-sizing:border-box"></div>
<div style="position:absolute;left:1231px;top:972px;font-size:28px;line-height:28px;font-weight:400;color:#151515;white-space:nowrap;">String</div>
<svg style="position:absolute;left:1482px;top:981px" width="17" height="10" viewBox="0 0 17 10"><path d="M0 0 L17 0 L8.5 10 Z" fill="#151515"/></svg>
<div style="position:absolute;left:1557px;top:948px;width:321px;height:73px;border:2px solid #c6c6c6;border-radius:12px;box-sizing:border-box"></div>
<div style="position:absolute;left:1574px;top:972px;font-size:28px;line-height:28px;font-weight:400;color:#4f4f4f;white-space:nowrap;">contant value</div>
<div style="position:absolute;left:1914px;top:966px;width:70px;height:42px;border:2px solid #c6c6c6;border-radius:21px;box-sizing:border-box;background:#fff"></div>
<div style="position:absolute;left:1923px;top:975px;width:24px;height:24px;border-radius:12px;background:#767676"></div>
<div style="position:absolute;left:2019px;top:948px;width:323px;height:73px;border:2px solid #c6c6c6;border-radius:12px;box-sizing:border-box"></div>
<div style="position:absolute;left:2035px;top:972px;font-size:28px;line-height:28px;font-weight:400;color:#151515;white-space:nowrap;">String</div>
<svg style="position:absolute;left:2289px;top:981px" width="17" height="10" viewBox="0 0 17 10"><path d="M0 0 L17 0 L8.5 10 Z" fill="#151515"/></svg>
<div style="position:absolute;left:2383px;top:966px;width:70px;height:42px;background:#2b62c4;border-radius:21px"></div>
<div style="position:absolute;left:2420px;top:975px;width:24px;height:24px;border-radius:12px;background:#fff"></div>
<svg style="position:absolute;left:2393px;top:979px" width="20" height="16" viewBox="0 0 20 16"><path d="M2.6 7.8 L7.2 12.4 L16.6 3" fill="none" stroke="#fff" stroke-width="3.6"/></svg>
<div style="position:absolute;left:2525px;top:966px;width:70px;height:42px;border:2px solid #c6c6c6;border-radius:21px;box-sizing:border-box;background:#fff"></div>
<div style="position:absolute;left:2534px;top:975px;width:24px;height:24px;border-radius:12px;background:#767676"></div>
<div style="position:absolute;left:2677px;top:966px;width:70px;height:42px;border:2px solid #c6c6c6;border-radius:21px;box-sizing:border-box;background:#fff"></div>
<div style="position:absolute;left:2686px;top:975px;width:24px;height:24px;border-radius:12px;background:#767676"></div>
<svg style="position:absolute;left:2825px;top:975px" width="20" height="20" viewBox="0 0 20 20"><path d="M3 3 L17 17 M17 3 L3 17" stroke="#b4441f" stroke-width="4.8" stroke-linecap="round"/></svg>
<div style="position:absolute;left:611px;top:1038px;width:2269px;height:2px;background:#c6c6c6"></div>
<svg style="position:absolute;left:633px;top:1083px" width="14" height="19" viewBox="0 0 14 19"><path d="M3 2.5 L10.5 9.5 L3 16.5" fill="none" stroke="#151515" stroke-width="4" stroke-linecap="round" stroke-linejoin="round"/></svg>
<div style="position:absolute;left:677px;top:1066px;width:106px;height:55px;background:#c3d9f5;border-radius:28px"></div>
<div style="position:absolute;left:230px;width:1000px;text-align:center;top:1078px;font-size:28px;line-height:28px;font-weight:400;color:#151515;white-space:nowrap;"><span style="border-bottom:2px dashed #151515;padding-bottom:3px">source</span></div>
<div style="position:absolute;left:870px;top:1056px;width:328px;height:73px;border:2px solid #c6c6c6;border-radius:12px;box-sizing:border-box"></div>
<div style="position:absolute;left:888px;top:1080px;font-size:28px;line-height:28px;font-weight:400;color:#151515;white-space:nowrap;">Event Source</div>
<div style="position:absolute;left:1215px;top:1056px;width:321px;height:73px;border:2px solid #c6c6c6;border-radius:12px;box-sizing:border-box"></div>
<div style="position:absolute;left:1231px;top:1080px;font-size:28px;line-height:28px;font-weight:400;color:#151515;white-space:nowrap;">String</div>
<svg style="position:absolute;left:1482px;top:1089px" width="17" height="10" viewBox="0 0 17 10"><path d="M0 0 L17 0 L8.5 10 Z" fill="#151515"/></svg>
<div style="position:absolute;left:1557px;top:1056px;width:321px;height:73px;border:2px solid #c6c6c6;border-radius:12px;box-sizing:border-box"></div>
<div style="position:absolute;left:1574px;top:1080px;font-size:28px;line-height:28px;font-weight:400;color:#4f4f4f;white-space:nowrap;">contant value</div>
<div style="position:absolute;left:1914px;top:1074px;width:70px;height:42px;border:2px solid #c6c6c6;border-radius:21px;box-sizing:border-box;background:#fff"></div>
<div style="position:absolute;left:1923px;top:1083px;width:24px;height:24px;border-radius:12px;background:#767676"></div>
<div style="position:absolute;left:2019px;top:1056px;width:323px;height:73px;border:2px solid #c6c6c6;border-radius:12px;box-sizing:border-box"></div>
<div style="position:absolute;left:2035px;top:1080px;font-size:28px;line-height:28px;font-weight:400;color:#151515;white-space:nowrap;">String</div>
<svg style="position:absolute;left:2289px;top:1089px" width="17" height="10" viewBox="0 0 17 10"><path d="M0 0 L17 0 L8.5 10 Z" fill="#151515"/></svg>
<div style="position:absolute;left:2383px;top:1074px;width:70px;height:42px;background:#2b62c4;border-radius:21px"></div>
<div style="position:absolute;left:2420px;top:1083px;width:24px;height:24px;border-radius:12px;background:#fff"></div>
<svg style="position:absolute;left:2393px;top:1087px" width="20" height="16" viewBox="0 0 20 16"><path d="M2.6 7.8 L7.2 12.4 L16.6 3" fill="none" stroke="#fff" stroke-width="3.6"/></svg>
<div style="position:absolute;left:2525px;top:1074px;width:70px;height:42px;border:2px solid #c6c6c6;border-radius:21px;box-sizing:border-box;background:#fff"></div>
<div style="position:absolute;left:2534px;top:1083px;width:24px;height:24px;border-radius:12px;background:#767676"></div>
<div style="position:absolute;left:2677px;top:1074px;width:70px;height:42px;border:2px solid #c6c6c6;border-radius:21px;box-sizing:border-box;background:#fff"></div>
<div style="position:absolute;left:2686px;top:1083px;width:24px;height:24px;border-radius:12px;background:#767676"></div>
<svg style="position:absolute;left:2825px;top:1083px" width="20" height="20" viewBox="0 0 20 20"><path d="M3 3 L17 17 M17 3 L3 17" stroke="#b4441f" stroke-width="4.8" stroke-linecap="round"/></svg>
<div style="position:absolute;left:611px;top:1146px;width:2269px;height:2px;background:#c6c6c6"></div>
<svg style="position:absolute;left:633px;top:1191px" width="14" height="19" viewBox="0 0 14 19"><path d="M3 2.5 L10.5 9.5 L3 16.5" fill="none" stroke="#151515" stroke-width="4" stroke-linecap="round" stroke-linejoin="round"/></svg>
<div style="position:absolute;left:677px;top:1174px;width:116px;height:55px;background:#c3d9f5;border-radius:28px"></div>
<div style="position:absolute;left:235px;width:1000px;text-align:center;top:1186px;font-size:28px;line-height:28px;font-weight:400;color:#151515;white-space:nowrap;"><span style="border-bottom:2px dashed #151515;padding-bottom:3px">subject</span></div>
<div style="position:absolute;left:870px;top:1164px;width:328px;height:73px;border:2px solid #c6c6c6;border-radius:12px;box-sizing:border-box"></div>
<div style="position:absolute;left:888px;top:1188px;font-size:28px;line-height:28px;font-weight:400;color:#151515;white-space:nowrap;">Event Subject</div>
<div style="position:absolute;left:1215px;top:1164px;width:321px;height:73px;border:2px solid #c6c6c6;border-radius:12px;box-sizing:border-box"></div>
<div style="position:absolute;left:1231px;top:1188px;font-size:28px;line-height:28px;font-weight:400;color:#151515;white-space:nowrap;">String</div>
<svg style="position:absolute;left:1482px;top:1197px" width="17" height="10" viewBox="0 0 17 10"><path d="M0 0 L17 0 L8.5 10 Z" fill="#151515"/></svg>
<div style="position:absolute;left:1557px;top:1164px;width:321px;height:73px;border:2px solid #c6c6c6;border-radius:12px;box-sizing:border-box"></div>
<div style="position:absolute;left:1574px;top:1188px;font-size:28px;line-height:28px;font-weight:400;color:#4f4f4f;white-space:nowrap;">contant value</div>
<div style="position:absolute;left:1914px;top:1182px;width:70px;height:42px;border:2px solid #c6c6c6;border-radius:21px;box-sizing:border-box;background:#fff"></div>
<div style="position:absolute;left:1923px;top:1191px;width:24px;height:24px;border-radius:12px;background:#767676"></div>
<div style="position:absolute;left:2019px;top:1164px;width:323px;height:73px;border:2px solid #c6c6c6;border-radius:12px;box-sizing:border-box"></div>
<div style="position:absolute;left:2035px;top:1188px;font-size:28px;line-height:28px;font-weight:400;color:#151515;white-space:nowrap;">String</div>
<svg style="position:absolute;left:2289px;top:1197px" width="17" height="10" viewBox="0 0 17 10"><path d="M0 0 L17 0 L8.5 10 Z" fill="#151515"/></svg>
<div style="position:absolute;left:2383px;top:1182px;width:70px;height:42px;border:2px solid #c6c6c6;border-radius:21px;box-sizing:border-box;background:#fff"></div>
<div style="position:absolute;left:2392px;top:1191px;width:24px;height:24px;border-radius:12px;background:#767676"></div>
<div style="position:absolute;left:2525px;top:1182px;width:70px;height:42px;border:2px solid #c6c6c6;border-radius:21px;box-sizing:border-box;background:#fff"></div>
<div style="position:absolute;left:2534px;top:1191px;width:24px;height:24px;border-radius:12px;background:#767676"></div>
<div style="position:absolute;left:2677px;top:1182px;width:70px;height:42px;border:2px solid #c6c6c6;border-radius:21px;box-sizing:border-box;background:#fff"></div>
<div style="position:absolute;left:2686px;top:1191px;width:24px;height:24px;border-radius:12px;background:#767676"></div>
<svg style="position:absolute;left:2825px;top:1191px" width="20" height="20" viewBox="0 0 20 20"><path d="M3 3 L17 17 M17 3 L3 17" stroke="#b4441f" stroke-width="4.8" stroke-linecap="round"/></svg>
<div style="position:absolute;left:611px;top:1254px;width:2269px;height:2px;background:#c6c6c6"></div>
<svg style="position:absolute;left:633px;top:1299px" width="14" height="19" viewBox="0 0 14 19"><path d="M3 2.5 L10.5 9.5 L3 16.5" fill="none" stroke="#151515" stroke-width="4" stroke-linecap="round" stroke-linejoin="round"/></svg>
<div style="position:absolute;left:677px;top:1282px;width:82px;height:55px;background:#c3d9f5;border-radius:28px"></div>
<div style="position:absolute;left:218px;width:1000px;text-align:center;top:1294px;font-size:28px;line-height:28px;font-weight:400;color:#151515;white-space:nowrap;"><span style="border-bottom:2px dashed #151515;padding-bottom:3px">time</span></div>
<div style="position:absolute;left:870px;top:1272px;width:328px;height:73px;border:2px solid #c6c6c6;border-radius:12px;box-sizing:border-box"></div>
<div style="position:absolute;left:888px;top:1296px;font-size:28px;line-height:28px;font-weight:400;color:#151515;white-space:nowrap;">Event Timestamp</div>
<div style="position:absolute;left:1215px;top:1272px;width:321px;height:73px;border:2px solid #c6c6c6;border-radius:12px;box-sizing:border-box"></div>
<div style="position:absolute;left:1231px;top:1296px;font-size:28px;line-height:28px;font-weight:400;color:#151515;white-space:nowrap;">Integer</div>
<svg style="position:absolute;left:1482px;top:1305px" width="17" height="10" viewBox="0 0 17 10"><path d="M0 0 L17 0 L8.5 10 Z" fill="#151515"/></svg>
<div style="position:absolute;left:1557px;top:1272px;width:321px;height:73px;border:2px solid #c6c6c6;border-radius:12px;box-sizing:border-box"></div>
<div style="position:absolute;left:1574px;top:1296px;font-size:28px;line-height:28px;font-weight:400;color:#4f4f4f;white-space:nowrap;">contant value</div>
<div style="position:absolute;left:1914px;top:1290px;width:70px;height:42px;border:2px solid #c6c6c6;border-radius:21px;box-sizing:border-box;background:#fff"></div>
<div style="position:absolute;left:1923px;top:1299px;width:24px;height:24px;border-radius:12px;background:#767676"></div>
<div style="position:absolute;left:2019px;top:1272px;width:323px;height:73px;border:2px solid #c6c6c6;border-radius:12px;box-sizing:border-box"></div>
<div style="position:absolute;left:2035px;top:1296px;font-size:28px;line-height:28px;font-weight:400;color:#151515;white-space:nowrap;">Integer</div>
<svg style="position:absolute;left:2289px;top:1305px" width="17" height="10" viewBox="0 0 17 10"><path d="M0 0 L17 0 L8.5 10 Z" fill="#151515"/></svg>
<div style="position:absolute;left:2383px;top:1290px;width:70px;height:42px;background:#2b62c4;border-radius:21px"></div>
<div style="position:absolute;left:2420px;top:1299px;width:24px;height:24px;border-radius:12px;background:#fff"></div>
<svg style="position:absolute;left:2393px;top:1303px" width="20" height="16" viewBox="0 0 20 16"><path d="M2.6 7.8 L7.2 12.4 L16.6 3" fill="none" stroke="#fff" stroke-width="3.6"/></svg>
<div style="position:absolute;left:2525px;top:1290px;width:70px;height:42px;border:2px solid #c6c6c6;border-radius:21px;box-sizing:border-box;background:#fff"></div>
<div style="position:absolute;left:2534px;top:1299px;width:24px;height:24px;border-radius:12px;background:#767676"></div>
<div style="position:absolute;left:2677px;top:1290px;width:70px;height:42px;border:2px solid #c6c6c6;border-radius:21px;box-sizing:border-box;background:#fff"></div>
<div style="position:absolute;left:2686px;top:1299px;width:24px;height:24px;border-radius:12px;background:#767676"></div>
<svg style="position:absolute;left:2825px;top:1299px" width="20" height="20" viewBox="0 0 20 20"><path d="M3 3 L17 17 M17 3 L3 17" stroke="#b4441f" stroke-width="4.8" stroke-linecap="round"/></svg>
<div style="position:absolute;left:611px;top:1362px;width:2269px;height:2px;background:#c6c6c6"></div>
<svg style="position:absolute;left:633px;top:1407px" width="14" height="19" viewBox="0 0 14 19"><path d="M3 2.5 L10.5 9.5 L3 16.5" fill="none" stroke="#151515" stroke-width="4" stroke-linecap="round" stroke-linejoin="round"/></svg>
<div style="position:absolute;left:677px;top:1390px;width:121px;height:55px;background:#c3d9f5;border-radius:28px"></div>
<div style="position:absolute;left:237px;width:1000px;text-align:center;top:1402px;font-size:28px;line-height:28px;font-weight:400;color:#151515;white-space:nowrap;"><span style="border-bottom:2px dashed #151515;padding-bottom:3px">process</span></div>
<div style="position:absolute;left:870px;top:1380px;width:328px;height:73px;border:2px solid #c6c6c6;border-radius:12px;box-sizing:border-box"></div>
<div style="position:absolute;left:888px;top:1404px;font-size:28px;line-height:28px;font-weight:400;color:#151515;white-space:nowrap;">Event Process</div>
<div style="position:absolute;left:1215px;top:1380px;width:321px;height:73px;border:2px solid #c6c6c6;border-radius:12px;box-sizing:border-box"></div>
<div style="position:absolute;left:1231px;top:1404px;font-size:28px;line-height:28px;font-weight:400;color:#151515;white-space:nowrap;">String</div>
<svg style="position:absolute;left:1482px;top:1413px" width="17" height="10" viewBox="0 0 17 10"><path d="M0 0 L17 0 L8.5 10 Z" fill="#151515"/></svg>
<div style="position:absolute;left:1557px;top:1380px;width:321px;height:73px;border:2px solid #c6c6c6;border-radius:12px;box-sizing:border-box"></div>
<div style="position:absolute;left:1574px;top:1404px;font-size:28px;line-height:28px;font-weight:400;color:#4f4f4f;white-space:nowrap;">contant value</div>
<div style="position:absolute;left:1914px;top:1398px;width:70px;height:42px;border:2px solid #c6c6c6;border-radius:21px;box-sizing:border-box;background:#fff"></div>
<div style="position:absolute;left:1923px;top:1407px;width:24px;height:24px;border-radius:12px;background:#767676"></div>
<div style="position:absolute;left:2019px;top:1380px;width:323px;height:73px;border:2px solid #c6c6c6;border-radius:12px;box-sizing:border-box"></div>
<div style="position:absolute;left:2035px;top:1404px;font-size:28px;line-height:28px;font-weight:400;color:#151515;white-space:nowrap;">String</div>
<svg style="position:absolute;left:2289px;top:1413px" width="17" height="10" viewBox="0 0 17 10"><path d="M0 0 L17 0 L8.5 10 Z" fill="#151515"/></svg>
<div style="position:absolute;left:2383px;top:1398px;width:70px;height:42px;border:2px solid #c6c6c6;border-radius:21px;box-sizing:border-box;background:#fff"></div>
<div style="position:absolute;left:2392px;top:1407px;width:24px;height:24px;border-radius:12px;background:#767676"></div>
<div style="position:absolute;left:2525px;top:1398px;width:70px;height:42px;border:2px solid #c6c6c6;border-radius:21px;box-sizing:border-box;background:#fff"></div>
<div style="position:absolute;left:2534px;top:1407px;width:24px;height:24px;border-radius:12px;background:#767676"></div>
<div style="position:absolute;left:2677px;top:1398px;width:70px;height:42px;border:2px solid #c6c6c6;border-radius:21px;box-sizing:border-box;background:#fff"></div>
<div style="position:absolute;left:2686px;top:1407px;width:24px;height:24px;border-radius:12px;background:#767676"></div>
<svg style="position:absolute;left:2825px;top:1407px" width="20" height="20" viewBox="0 0 20 20"><path d="M3 3 L17 17 M17 3 L3 17" stroke="#b4441f" stroke-width="4.8" stroke-linecap="round"/></svg>
<div style="position:absolute;left:611px;top:1470px;width:2269px;height:2px;background:#c6c6c6"></div>
<svg style="position:absolute;left:633px;top:1515px" width="14" height="19" viewBox="0 0 14 19"><path d="M3 2.5 L10.5 9.5 L3 16.5" fill="none" stroke="#151515" stroke-width="4" stroke-linecap="round" stroke-linejoin="round"/></svg>
<div style="position:absolute;left:677px;top:1498px;width:100px;height:55px;background:#c3d9f5;border-radius:28px"></div>
<div style="position:absolute;left:227px;width:1000px;text-align:center;top:1510px;font-size:28px;line-height:28px;font-weight:400;color:#151515;white-space:nowrap;"><span style="border-bottom:2px dashed #151515;padding-bottom:3px">status</span></div>
<div style="position:absolute;left:870px;top:1488px;width:328px;height:73px;border:2px solid #c6c6c6;border-radius:12px;box-sizing:border-box"></div>
<div style="position:absolute;left:888px;top:1512px;font-size:28px;line-height:28px;font-weight:400;color:#151515;white-space:nowrap;">Event Status</div>
<div style="position:absolute;left:1215px;top:1488px;width:321px;height:73px;border:2px solid #c6c6c6;border-radius:12px;box-sizing:border-box"></div>
<div style="position:absolute;left:1231px;top:1512px;font-size:28px;line-height:28px;font-weight:400;color:#151515;white-space:nowrap;">String</div>
<svg style="position:absolute;left:1482px;top:1521px" width="17" height="10" viewBox="0 0 17 10"><path d="M0 0 L17 0 L8.5 10 Z" fill="#151515"/></svg>
<div style="position:absolute;left:1557px;top:1488px;width:321px;height:73px;border:2px solid #c6c6c6;border-radius:12px;box-sizing:border-box"></div>
<div style="position:absolute;left:1574px;top:1512px;font-size:28px;line-height:28px;font-weight:400;color:#4f4f4f;white-space:nowrap;">contant value</div>
<div style="position:absolute;left:1914px;top:1506px;width:70px;height:42px;border:2px solid #c6c6c6;border-radius:21px;box-sizing:border-box;background:#fff"></div>
<div style="position:absolute;left:1923px;top:1515px;width:24px;height:24px;border-radius:12px;background:#767676"></div>
<div style="position:absolute;left:2019px;top:1488px;width:323px;height:73px;border:2px solid #c6c6c6;border-radius:12px;box-sizing:border-box"></div>
<div style="position:absolute;left:2035px;top:1512px;font-size:28px;line-height:28px;font-weight:400;color:#151515;white-space:nowrap;">String</div>
<svg style="position:absolute;left:2289px;top:1521px" width="17" height="10" viewBox="0 0 17 10"><path d="M0 0 L17 0 L8.5 10 Z" fill="#151515"/></svg>
<div style="position:absolute;left:2383px;top:1506px;width:70px;height:42px;border:2px solid #c6c6c6;border-radius:21px;box-sizing:border-box;background:#fff"></div>
<div style="position:absolute;left:2392px;top:1515px;width:24px;height:24px;border-radius:12px;background:#767676"></div>
<div style="position:absolute;left:2525px;top:1506px;width:70px;height:42px;border:2px solid #c6c6c6;border-radius:21px;box-sizing:border-box;background:#fff"></div>
<div style="position:absolute;left:2534px;top:1515px;width:24px;height:24px;border-radius:12px;background:#767676"></div>
<div style="position:absolute;left:2677px;top:1506px;width:70px;height:42px;border:2px solid #c6c6c6;border-radius:21px;box-sizing:border-box;background:#fff"></div>
<div style="position:absolute;left:2686px;top:1515px;width:24px;height:24px;border-radius:12px;background:#767676"></div>
<svg style="position:absolute;left:2825px;top:1515px" width="20" height="20" viewBox="0 0 20 20"><path d="M3 3 L17 17 M17 3 L3 17" stroke="#b4441f" stroke-width="4.8" stroke-linecap="round"/></svg>
<div style="position:absolute;left:611px;top:1578px;width:2269px;height:2px;background:#c6c6c6"></div>
<svg style="position:absolute;left:633px;top:1623px" width="14" height="19" viewBox="0 0 14 19"><path d="M3 2.5 L10.5 9.5 L3 16.5" fill="none" stroke="#151515" stroke-width="4" stroke-linecap="round" stroke-linejoin="round"/></svg>
<div style="position:absolute;left:677px;top:1606px;width:175px;height:55px;background:#c3d9f5;border-radius:28px"></div>
<div style="position:absolute;left:264px;width:1000px;text-align:center;top:1618px;font-size:28px;line-height:28px;font-weight:400;color:#151515;white-space:nowrap;"><span style="border-bottom:2px dashed #151515;padding-bottom:3px">correlationId</span></div>
<div style="position:absolute;left:870px;top:1596px;width:328px;height:73px;border:2px solid #c6c6c6;border-radius:12px;box-sizing:border-box"></div>
<div style="position:absolute;left:888px;top:1620px;font-size:28px;line-height:28px;font-weight:400;color:#151515;white-space:nowrap;">Event Correlation ID</div>
<div style="position:absolute;left:1215px;top:1596px;width:321px;height:73px;border:2px solid #c6c6c6;border-radius:12px;box-sizing:border-box"></div>
<div style="position:absolute;left:1231px;top:1620px;font-size:28px;line-height:28px;font-weight:400;color:#151515;white-space:nowrap;">String</div>
<svg style="position:absolute;left:1482px;top:1629px" width="17" height="10" viewBox="0 0 17 10"><path d="M0 0 L17 0 L8.5 10 Z" fill="#151515"/></svg>
<div style="position:absolute;left:1557px;top:1596px;width:321px;height:73px;border:2px solid #c6c6c6;border-radius:12px;box-sizing:border-box"></div>
<div style="position:absolute;left:1574px;top:1620px;font-size:28px;line-height:28px;font-weight:400;color:#4f4f4f;white-space:nowrap;">contant value</div>
<div style="position:absolute;left:1914px;top:1614px;width:70px;height:42px;border:2px solid #c6c6c6;border-radius:21px;box-sizing:border-box;background:#fff"></div>
<div style="position:absolute;left:1923px;top:1623px;width:24px;height:24px;border-radius:12px;background:#767676"></div>
<div style="position:absolute;left:2019px;top:1596px;width:323px;height:73px;border:2px solid #c6c6c6;border-radius:12px;box-sizing:border-box"></div>
<div style="position:absolute;left:2035px;top:1620px;font-size:28px;line-height:28px;font-weight:400;color:#151515;white-space:nowrap;">String</div>
<svg style="position:absolute;left:2289px;top:1629px" width="17" height="10" viewBox="0 0 17 10"><path d="M0 0 L17 0 L8.5 10 Z" fill="#151515"/></svg>
<div style="position:absolute;left:2383px;top:1614px;width:70px;height:42px;border:2px solid #c6c6c6;border-radius:21px;box-sizing:border-box;background:#fff"></div>
<div style="position:absolute;left:2392px;top:1623px;width:24px;height:24px;border-radius:12px;background:#767676"></div>
<div style="position:absolute;left:2525px;top:1614px;width:70px;height:42px;border:2px solid #c6c6c6;border-radius:21px;box-sizing:border-box;background:#fff"></div>
<div style="position:absolute;left:2534px;top:1623px;width:24px;height:24px;border-radius:12px;background:#767676"></div>
<div style="position:absolute;left:2677px;top:1614px;width:70px;height:42px;border:2px solid #c6c6c6;border-radius:21px;box-sizing:border-box;background:#fff"></div>
<div style="position:absolute;left:2686px;top:1623px;width:24px;height:24px;border-radius:12px;background:#767676"></div>
<svg style="position:absolute;left:2825px;top:1623px" width="20" height="20" viewBox="0 0 20 20"><path d="M3 3 L17 17 M17 3 L3 17" stroke="#b4441f" stroke-width="4.8" stroke-linecap="round"/></svg>
<div style="position:absolute;left:611px;top:1686px;width:2269px;height:2px;background:#c6c6c6"></div>
<svg style="position:absolute;left:633px;top:1731px" width="14" height="19" viewBox="0 0 14 19"><path d="M3 2.5 L10.5 9.5 L3 16.5" fill="none" stroke="#151515" stroke-width="4" stroke-linecap="round" stroke-linejoin="round"/></svg>
<div style="position:absolute;left:677px;top:1714px;width:84px;height:55px;background:#c3d9f5;border-radius:28px"></div>
<div style="position:absolute;left:219px;width:1000px;text-align:center;top:1726px;font-size:28px;line-height:28px;font-weight:400;color:#151515;white-space:nowrap;"><span style="border-bottom:2px dashed #151515;padding-bottom:3px">data</span></div>
<div style="position:absolute;left:870px;top:1704px;width:328px;height:73px;border:2px solid #c4c4c4;box-shadow:inset 0 0 0 3px #2b62c4;border-radius:12px;box-sizing:border-box"></div>
<div style="position:absolute;left:888px;top:1728px;font-size:28px;line-height:28px;font-weight:400;color:#151515;white-space:nowrap;">Event Data</div>
<div style="position:absolute;left:1215px;top:1704px;width:663px;height:73px;border:2px solid #c6c6c6;border-radius:12px;box-sizing:border-box"></div>
<div style="position:absolute;left:1231px;top:1728px;font-size:28px;line-height:28px;font-weight:400;color:#151515;white-space:nowrap;">Object</div>
<svg style="position:absolute;left:1824px;top:1737px" width="17" height="10" viewBox="0 0 17 10"><path d="M0 0 L17 0 L8.5 10 Z" fill="#151515"/></svg>
<div style="position:absolute;left:1914px;top:1722px;width:70px;height:42px;border:2px solid #c6c6c6;border-radius:21px;box-sizing:border-box;background:#fff"></div>
<div style="position:absolute;left:1923px;top:1731px;width:24px;height:24px;border-radius:12px;background:#767676"></div>
<div style="position:absolute;left:2019px;top:1704px;width:323px;height:73px;border:2px solid #c6c6c6;border-radius:12px;box-sizing:border-box"></div>
<svg style="position:absolute;left:2289px;top:1737px" width="17" height="10" viewBox="0 0 17 10"><path d="M0 0 L17 0 L8.5 10 Z" fill="#151515"/></svg>
<div style="position:absolute;left:2383px;top:1722px;width:70px;height:42px;border:2px solid #c6c6c6;border-radius:21px;box-sizing:border-box;background:#fff"></div>
<div style="position:absolute;left:2392px;top:1731px;width:24px;height:24px;border-radius:12px;background:#767676"></div>
<div style="position:absolute;left:2525px;top:1722px;width:70px;height:42px;border:2px solid #c6c6c6;border-radius:21px;box-sizing:border-box;background:#fff"></div>
<div style="position:absolute;left:2534px;top:1731px;width:24px;height:24px;border-radius:12px;background:#767676"></div>
<div style="position:absolute;left:2677px;top:1722px;width:70px;height:42px;border:2px solid #c6c6c6;border-radius:21px;box-sizing:border-box;background:#fff"></div>
<div style="position:absolute;left:2686px;top:1731px;width:24px;height:24px;border-radius:12px;background:#767676"></div>
<svg style="position:absolute;left:2825px;top:1731px" width="20" height="20" viewBox="0 0 20 20"><path d="M3 3 L17 17 M17 3 L3 17" stroke="#b4441f" stroke-width="4.8" stroke-linecap="round"/></svg>
</div></div>
<div style="position:absolute;left:378px;top:1824px;width:197px;height:74px;background:#2b62c4;border-radius:37px"></div>
<div style="position:absolute;left:-24px;width:1000px;text-align:center;top:1848px;font-size:28px;line-height:28px;font-weight:400;color:#ffffff;white-space:nowrap;">Confirm</div>
<div style="position:absolute;left:609px;top:1848px;font-size:28px;line-height:28px;font-weight:400;color:#2b62c4;white-space:nowrap;">Cancel</div>
</div></body></html>
